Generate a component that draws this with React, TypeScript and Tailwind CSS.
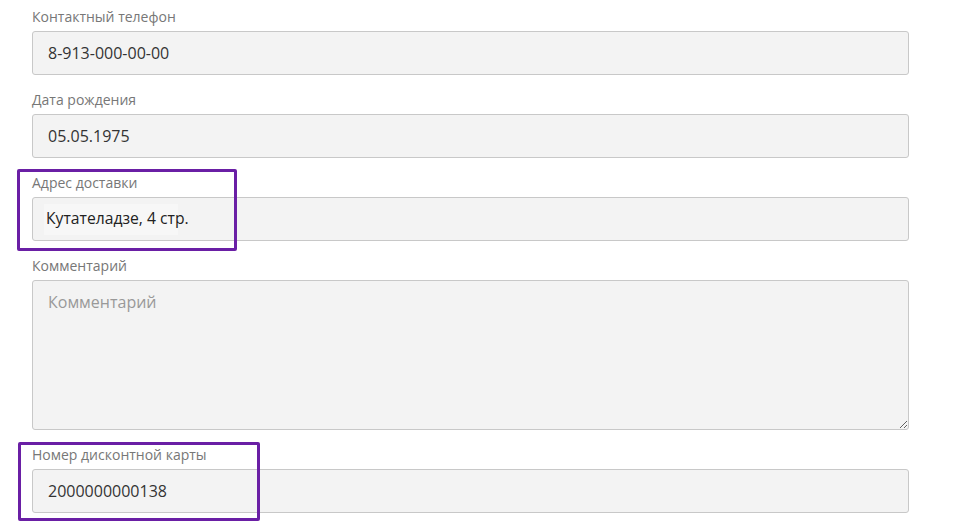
import React from "react";

const font = { fontFamily: '"Open Sans", "Noto Sans", sans-serif' };

function Label({ children }: { children: React.ReactNode }) {
  return <div className="h-5 mb-1 text-[14px] leading-5 text-[#777]">{children}</div>;
}

function Field({ label, value }: { label: string; value: string }) {
  return (
    <div className="mb-[15px]">
      <Label>{label}</Label>
      <div className="h-[44px] flex items-center px-[15px] bg-[#f3f3f3] border border-[#c8c8c8] rounded-[3px] text-[16px] text-[#333]">
        {value}
      </div>
    </div>
  );
}

export default function App() {
  return (
    <div className="relative w-[963px] h-[532px] bg-white overflow-hidden" style={font}>
      <div className="pl-[32px] pt-[7px] w-[909px]">
        <Field label="Контактный телефон" value="8-913-000-00-00" />
        <Field label="Дата рождения" value="05.05.1975" />

        {/* address, pasted in with its own lighter background */}
        <div className="mb-[15px]">
          <Label>Адрес доставки</Label>
          <div className="h-[44px] flex items-center pl-[11px] bg-[#f3f3f3] border border-[#c8c8c8] rounded-[3px]">
            <span className="w-[134px] h-[31px] flex items-center pl-[2px] whitespace-nowrap bg-[#f7f7f7] text-[15.7px] text-[#222]">
              Кутателадзе, 4 стр.
            </span>
          </div>
        </div>

        <div className="mb-[15px]">
          <Label>Комментарий</Label>
          <textarea
            placeholder="Комментарий"
            className="block w-full h-[150px] px-[15px] pt-[10px] bg-[#f3f3f3] border border-[#c8c8c8] rounded-[3px] text-[16px] leading-[22px] text-[#333] placeholder:text-[#999] outline-none"
            style={font}
          />
        </div>

        <Field label="Номер дисконтной карты" value="2000000000138" />
      </div>

      {/* purple annotation frames */}
      <div className="absolute left-[17px] top-[169px] w-[220px] h-[82px] border-[3px] border-[#6a1fa5] rounded-[2px]" />
      <div className="absolute left-[18px] top-[442px] w-[242px] h-[79px] border-[3px] border-[#6a1fa5] rounded-[2px]" />
    </div>
  );
}
